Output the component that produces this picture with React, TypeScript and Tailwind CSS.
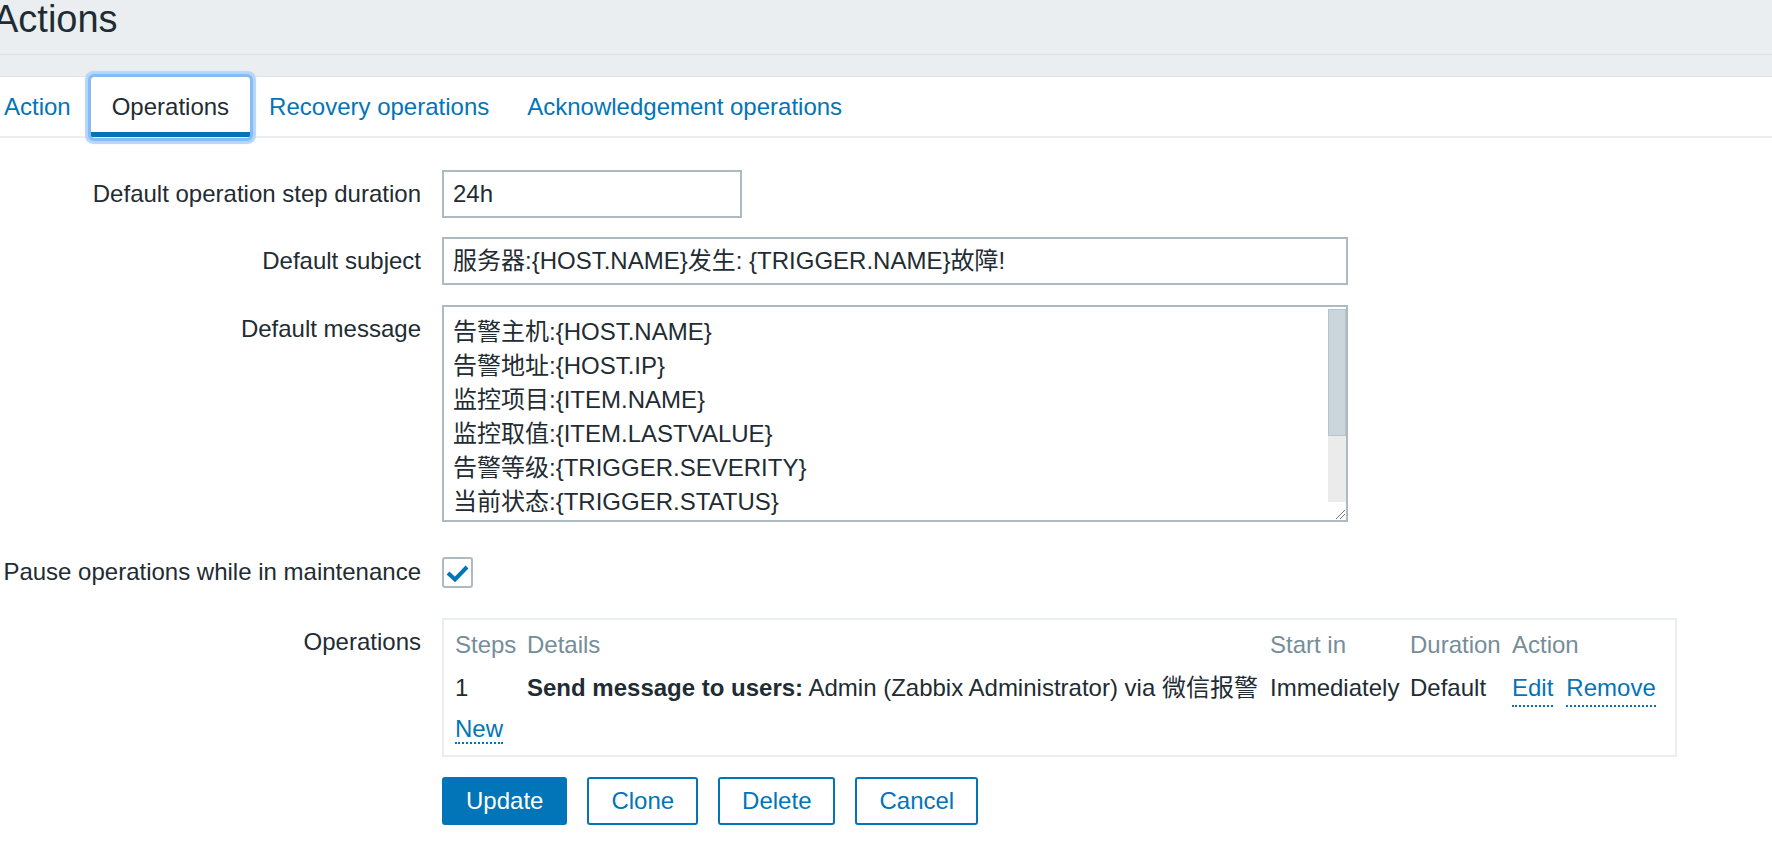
import React from "react";

const BLUE = "#0275b8";

function Label({ children }: { children: React.ReactNode }) {
  return (
    <div className="w-[421px] shrink-0 h-[48px] flex items-center justify-end text-right whitespace-nowrap">
      {children}
    </div>
  );
}

function Link({ children }: { children: React.ReactNode }) {
  return (
    <span className="text-[#0275b8] border-b-2 border-dotted border-[#0275b8]">{children}</span>
  );
}

export default function App() {
  const lines = [
    "告警主机:{HOST.NAME}",
    "告警地址:{HOST.IP}",
    "监控项目:{ITEM.NAME}",
    "监控取值:{ITEM.LASTVALUE}",
    "告警等级:{TRIGGER.SEVERITY}",
    "当前状态:{TRIGGER.STATUS}",
    "告警信息:{TRIGGER.NAME}",
  ];
  return (
    <div className="w-[1772px] h-[848px] overflow-hidden bg-white text-[#1f2c33] text-[24px] font-['Liberation_Sans','Noto_Sans_CJK_SC',sans-serif]">
      {/* header */}
      <div className="bg-[#ebeef0]">
        <div className="h-[55px] border-b border-[#dbe1e4]">
          <h1 className="-ml-[7px] text-[38px] leading-[38px] font-normal">Actions</h1>
        </div>
        <div className="h-[22px] border-b border-[#dfe4e7]" />
      </div>

      {/* tabs */}
      <div className="flex h-[61px] border-b-2 border-[#ebeef0] leading-[34px]">
        <div className="-ml-[16px] px-[20px] flex items-center text-[#0275b8]">Action</div>
        <div className="relative px-[21px] flex items-center text-[#1f2c33]">
          <span>Operations</span>
          <div className="absolute left-0 right-0 -bottom-[1px] h-[5px] bg-[#0275b8]" />
          <div className="absolute left-0 right-0 top-0 -bottom-[2px] rounded-[3px] shadow-[0_0_0_3px_#86bcf3,0_0_1px_6px_#b4d6f9]" />
        </div>
        <div className="px-[19px] flex items-center text-[#0275b8]">Recovery operations</div>
        <div className="px-[19px] flex items-center text-[#0275b8]">Acknowledgement operations</div>
      </div>

      {/* form */}
      <div className="pt-[32px]">
        <div className="flex">
          <Label>Default operation step duration</Label>
          <div className="ml-[21px] w-[300px] h-[48px] border-2 border-[#acbbc2] pl-[9px] flex items-center">24h</div>
        </div>

        <div className="flex mt-[19px]">
          <Label>Default subject</Label>
          <div className="ml-[21px] w-[906px] h-[48px] border-2 border-[#acbbc2] pl-[9px] flex items-center whitespace-nowrap">
            服务器:{"{HOST.NAME}"}发生: {"{TRIGGER.NAME}"}故障!
          </div>
        </div>

        <div className="flex mt-[20px]">
          <Label>Default message</Label>
          <div className="ml-[21px] w-[906px] h-[217px] border-2 border-[#acbbc2] flex">
            <div className="flex-1 overflow-hidden pl-[9px] pt-[8px] leading-[34px] whitespace-nowrap">
              {lines.map((l) => (
                <div key={l}>{l}</div>
              ))}
            </div>
            <div className="w-[18px] flex flex-col">
              <div className="h-[2px]" />
              <div className="h-[127px] bg-[#cbd5dc] border border-[#b7c4cc]" />
              <div className="flex-1 bg-[#ebebeb]" />
              <div className="h-[18px] bg-white flex items-end justify-end">
                <svg width="12" height="12" viewBox="0 0 12 12">
                  <line x1="2" y1="11" x2="11" y2="2" stroke="#777" strokeWidth="1" />
                  <line x1="6" y1="11" x2="11" y2="6" stroke="#777" strokeWidth="1" />
                </svg>
              </div>
            </div>
          </div>
        </div>

        <div className="flex mt-[26px]">
          <Label>Pause operations while in maintenance</Label>
          <div className="ml-[21px] h-[48px] flex items-center">
            <div className="w-[31px] h-[31px] border-2 border-[#acbbc2] rounded-[3px] flex items-center justify-center">
              <svg width="27" height="27" viewBox="0 0 27 27">
                <polyline points="4,14 11,20.5 23,8" fill="none" stroke={BLUE} strokeWidth="4" />
              </svg>
            </div>
          </div>
        </div>

        <div className="flex mt-[22px]">
          <Label>Operations</Label>
          <div className="ml-[21px] w-[1235px] border-2 border-[#e9edf0] pt-[8px] pb-[9px] pl-[11px] leading-[34px] whitespace-nowrap">
            <div className="grid grid-cols-[72px_743px_140px_102px_1fr] text-[#768d99]">
              <div>Steps</div>
              <div>Details</div>
              <div>Start in</div>
              <div>Duration</div>
              <div>Action</div>
            </div>
            <div className="grid grid-cols-[72px_743px_140px_102px_1fr] mt-[9px]">
              <div>1</div>
              <div>
                <span className="font-bold">Send message to users:</span> Admin (Zabbix Administrator) via 微信报警
              </div>
              <div>Immediately</div>
              <div>Default</div>
              <div className="flex gap-[13px]">
                <Link>Edit</Link>
                <Link>Remove</Link>
              </div>
            </div>
            <div className="mt-[5px]">
              <Link>New</Link>
            </div>
          </div>
        </div>

        <div className="flex mt-[20px] ml-[442px] gap-[20px]">
          <button className="h-[48px] px-[22px] border-2 border-[#0275b8] bg-[#0275b8] text-white rounded-[3px]">Update</button>
          <button className="h-[48px] px-[22px] border-2 border-[#0275b8] bg-white text-[#0275b8] rounded-[3px]">Clone</button>
          <button className="h-[48px] px-[22px] border-2 border-[#0275b8] bg-white text-[#0275b8] rounded-[3px]">Delete</button>
          <button className="h-[48px] px-[22px] border-2 border-[#0275b8] bg-white text-[#0275b8] rounded-[3px]">Cancel</button>
        </div>
      </div>
    </div>
  );
}
